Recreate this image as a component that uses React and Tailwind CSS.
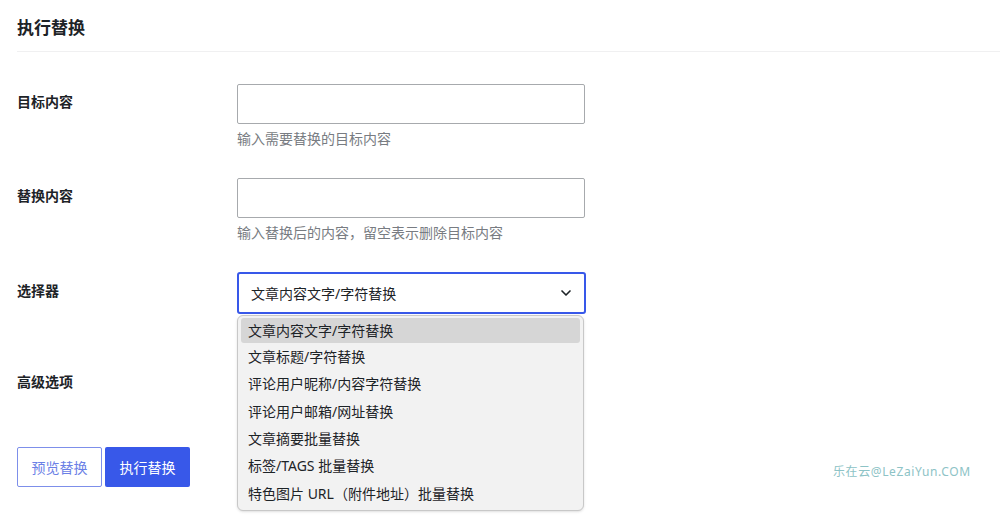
import React from 'react';
import { ChevronDown } from 'lucide-react';

const options = [
  '文章内容文字/字符替换',
  '文章标题/字符替换',
  '评论用户昵称/内容字符替换',
  '评论用户邮箱/网址替换',
  '文章摘要批量替换',
  '标签/TAGS 批量替换',
  '特色图片 URL（附件地址）批量替换',
];

const font = { fontFamily: '"Noto Sans", "Noto Sans CJK SC", sans-serif' };

function Row({ label, children, className = '' }) {
  return (
    <div className={`flex ${className}`}>
      <div className="w-[220px] shrink-0 text-[14px] font-bold text-[#1d2327] leading-[20px]">{label}</div>
      <div className="flex-1">{children}</div>
    </div>
  );
}

export default function App() {
  return (
    <div className="relative w-[1000px] h-[521px] overflow-hidden bg-white" style={font}>
      <div className="pl-[17px]">
        {/* Header */}
        <div className="h-[52px] flex items-center border-b border-[#f0f0f1]">
          <h2 className="text-[17px] font-bold text-[#1d2327] mt-[4px]">执行替换</h2>
        </div>

        {/* Target */}
        <Row label={<div className="pt-[8px]">目标内容</div>} className="pt-[32px]">
          <input className="block w-[348px] h-[40px] border border-[#a7aaad] rounded-[2px] bg-white" />
          <p className="mt-[5px] text-[14px] text-[#787c82] leading-[20px]">输入需要替换的目标内容</p>
        </Row>

        {/* Replace */}
        <Row label={<div className="pt-[8px]">替换内容</div>} className="pt-[29px]">
          <input className="block w-[348px] h-[40px] border border-[#a7aaad] rounded-[2px] bg-white" />
          <p className="mt-[5px] text-[14px] text-[#787c82] leading-[20px]">输入替换后的内容，留空表示删除目标内容</p>
        </Row>

        {/* Selector */}
        <Row label={<div className="pt-[9px]">选择器</div>} className="pt-[29px]">
          <div className="relative w-[349px]">
            <div className="h-[42px] border-2 border-[#3858e9] rounded-[3px] flex items-center justify-between pl-[12px] pr-[10px] text-[14px] text-[#1d2327]">
              <span>文章内容文字/字符替换</span>
              <ChevronDown size={16} strokeWidth={2.5} className="text-[#1d2327]" />
            </div>
            <div className="h-[56px]" />
            <span className="block w-[14px] h-[14px] border border-[#8c8f94] rounded-[2px]" />

            {/* Dropdown menu */}
            <div className="absolute left-0 top-[43px] w-[347px] h-[196px] bg-[#f2f2f2] border border-[#c8c8c8] rounded-[6px] px-[3px] pt-[2px] shadow-sm">
              {options.map((o, i) => (
                <div
                  key={o}
                  className={`flex items-center pl-[7px] text-[14px] text-[#1d2327] rounded-[3px] ${i === 0 ? 'h-[25px] bg-[#d6d6d6]' : 'h-[27.3px]'}`}
                >
                  {o}
                </div>
              ))}
            </div>
          </div>
        </Row>

        <div className="absolute left-[17px] top-[372px] text-[14px] font-bold text-[#1d2327] leading-[20px]">高级选项</div>

        {/* Buttons */}
        <div className="absolute left-[17px] top-[447px] flex gap-[3px]">
          <button className="w-[85px] h-[40px] border border-[#7d8fea] rounded-[2px] bg-white text-[14px] text-[#6b80e6]">预览替换</button>
          <button className="w-[85px] h-[40px] rounded-[2px] bg-[#3858e9] text-[14px] text-white">执行替换</button>
        </div>
      </div>

      <div className="absolute left-[833px] top-[463px] text-[12px] text-[#8dc3c6] tracking-[0.6px]">乐在云@LeZaiYun.COM</div>
    </div>
  );
}
